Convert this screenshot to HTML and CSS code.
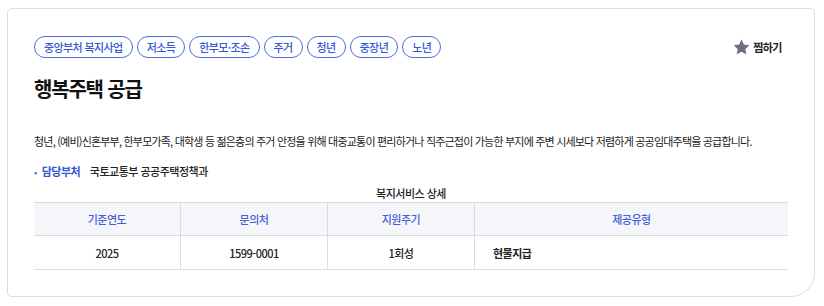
FILE: index.html
```html
<!DOCTYPE html>
<html lang="ko">
<head>
    <meta charset="UTF-8">
    <meta name="viewport" content="width=device-width, initial-scale=1.0">
    <title>행복주택 공급</title>
    <link rel="stylesheet" href="styles.css">
</head>
<body>
    <div class="card">
        <div class="card-top">
            <ul class="tags">
                <li>중앙부처 복지사업</li>
                <li>저소득</li>
                <li>한부모·조손</li>
                <li>주거</li>
                <li>청년</li>
                <li>중장년</li>
                <li>노년</li>
            </ul>
            <button class="zzim">
                <svg width="17" height="16" viewBox="0 0 24 23"><path d="M12 0.8l3.4 7.1 7.8 1-5.7 5.4 1.4 7.7L12 18.3 5.1 22l1.4-7.7L0.8 8.9l7.8-1z" fill="#6c6f82"/></svg>
                찜하기
            </button>
        </div>

        <h1 class="title">행복주택 공급</h1>

        <p class="desc">청년, (예비)신혼부부, 한부모가족, 대학생 등 젊은층의 주거 안정을 위해 대중교통이 편리하거나 직주근접이 가능한 부지에 주변 시세보다 저렴하게 공공임대주택을 공급합니다.</p>

        <ul class="info">
            <li><span class="info-label">담당부처</span> 국토교통부 공공주택정책과</li>
        </ul>

        <table class="detail">
            <caption>복지서비스 상세</caption>
            <thead>
                <tr>
                    <th>기준연도</th>
                    <th>문의처</th>
                    <th>지원주기</th>
                    <th class="wide">제공유형</th>
                </tr>
            </thead>
            <tbody>
                <tr>
                    <td>2025</td>
                    <td>1599-0001</td>
                    <td>1회성</td>
                    <td class="left">현물지급</td>
                </tr>
            </tbody>
        </table>
    </div>
</body>
</html>
```

FILE: styles.css
```css
body { margin: 0; padding: 8px 0 0 7px; background-color: #fff; font-family: "Noto Sans CJK KR", "Noto Sans", sans-serif; color: #222; }
.card { width: 754px; height: 234px; padding: 27px 26px 26px 26px; border: 1px solid #dcdcdc; border-radius: 5px 5px 24px 5px; }
.card-top { display: flex; justify-content: space-between; align-items: center; }
.tags { display: flex; gap: 4px; margin: 0; padding: 0; list-style: none; }
.tags li { height: 22px; line-height: 20px; padding: 0 9px; border: 1px solid #4d6fe3; border-radius: 11px; color: #3557d4; font-size: 11px; font-weight: 500; letter-spacing: -0.6px; box-sizing: border-box; }
.zzim { display: flex; align-items: center; gap: 3px; margin-right: 6px; padding: 0; border: none; background: none; font-family: inherit; font-size: 11px; font-weight: 700; color: #222; letter-spacing: -0.5px; cursor: pointer; }
.title { margin: 16px 0 0 0; font-size: 20px; line-height: 30px; font-weight: 700; color: #111; letter-spacing: -1.2px; }
.desc { margin: 28px 0 0 0; font-size: 11px; line-height: 18px; letter-spacing: -0.8px; }
.info { margin: 13px 0 0 0; padding: 0; list-style: none; font-size: 11px; line-height: 16px; font-weight: 500; letter-spacing: -0.5px; }
.info li::before { content: "•"; color: #4d6fe3; margin: 0 5px 0 0; font-size: 9px; }
.info-label { color: #3557d4; font-weight: 700; margin-right: 7px; }
.detail { width: 100%; margin-top: 3px; border-collapse: collapse; font-size: 11px; letter-spacing: -0.5px; }
.detail caption { font-weight: 500; line-height: 18px; color: #222; }
.detail th { height: 32px; padding: 0; background-color: #f5f6fa; color: #4660d8; font-weight: 500; border-top: 1px solid #dcdcdc; border-bottom: 1px solid #dcdcdc; border-left: 1px solid #dcdcdc; width: 146px; }
.detail td { height: 33px; padding: 0; text-align: center; font-weight: 500; border-bottom: 1px solid #dcdcdc; border-left: 1px solid #dcdcdc; }
.detail tr > :first-child { border-left: none; }
.detail th.wide { width: auto; }
.detail td.left { text-align: left; padding-left: 18px; font-weight: 700; }
```
